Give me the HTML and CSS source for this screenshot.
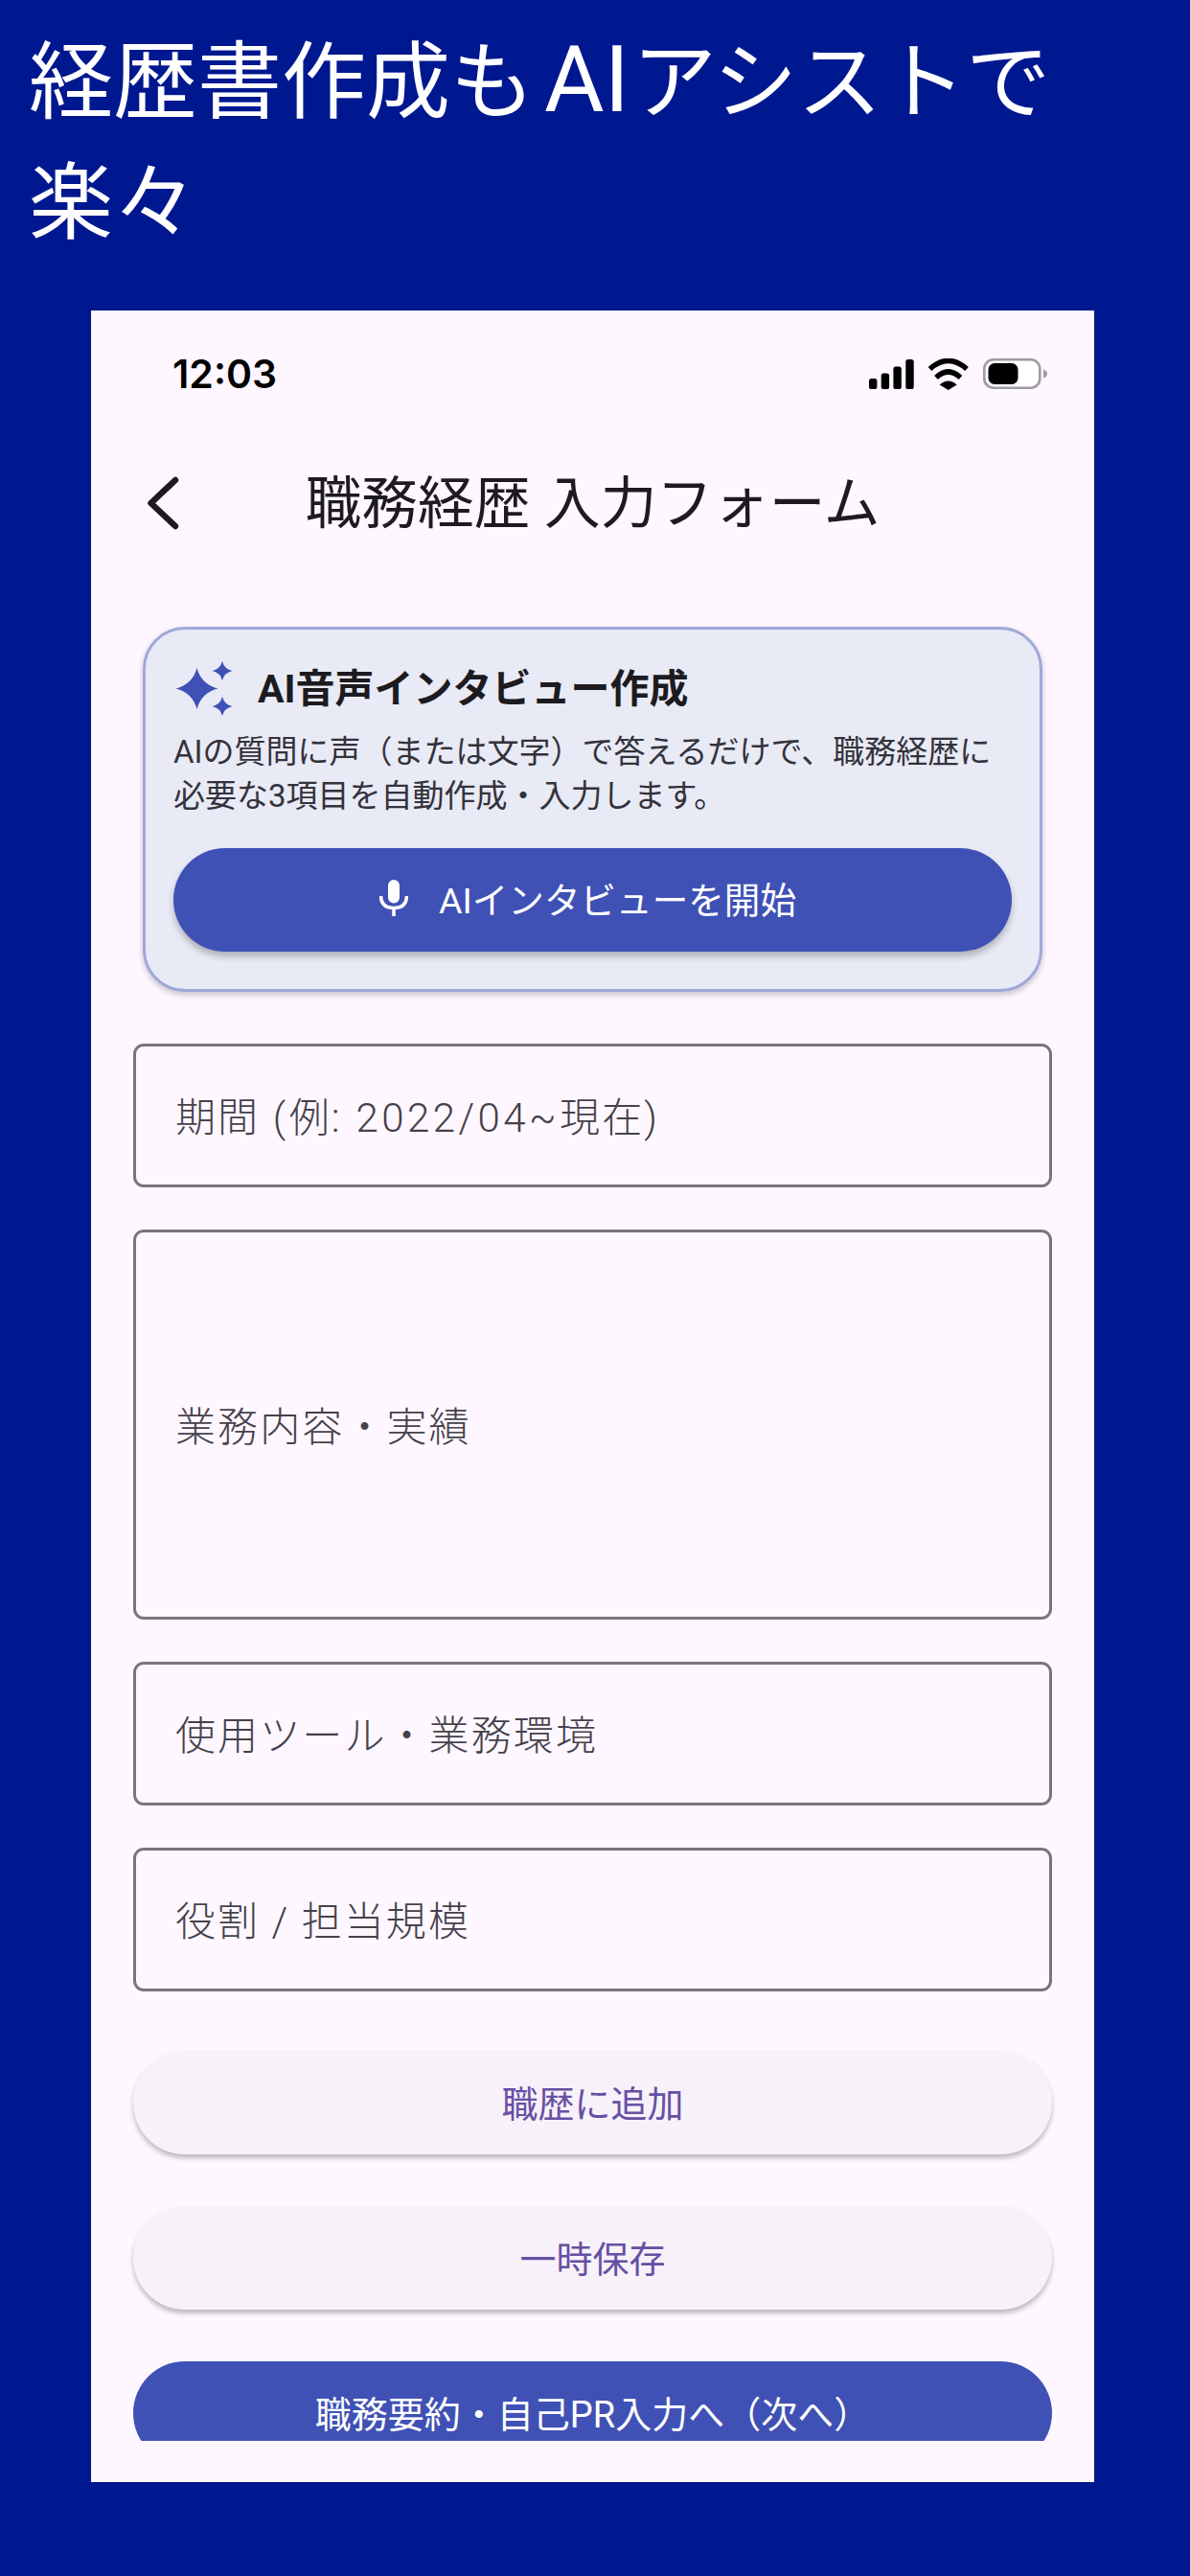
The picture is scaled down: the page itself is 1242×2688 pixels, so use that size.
FILE: index.html
```html
<!DOCTYPE html>
<html lang="ja">
<head>
<meta charset="utf-8">
<title>職務経歴 入力フォーム</title>
<link rel="stylesheet" href="styles.css">
</head>
<body>
<h1 class="headline">経歴書作成も<span class="headline-ai">AI</span>アシストで<br>楽々</h1>
<main class="phone">
  <div class="screen">
    <div class="status-bar">
      <span class="clock">12:03</span>
      <div class="status-icons">
        <svg class="ic-signal" viewBox="0 0 47 31" aria-hidden="true"><rect x="0" y="20" width="8.4" height="11" rx="2.6"/><rect x="12.7" y="14.5" width="8.4" height="16.5" rx="2.6"/><rect x="25.4" y="7.5" width="8.4" height="23.5" rx="2.6"/><rect x="38.3" y="0" width="8.4" height="31" rx="2.6"/></svg>
        <svg class="ic-wifi" viewBox="0 0 44 33" aria-hidden="true"><path class="wifi-arc" d="M2.5 11Q21.7 -6 41 11"/><path class="wifi-arc" d="M9 20Q21.7 8 34.4 20"/><path d="M12.7 27.5Q21.7 19.5 30.7 27.5L21.7 33Z"/></svg>
        <svg class="ic-battery" viewBox="0 0 67 32" aria-hidden="true"><rect class="batt-case" x="1.3" y="1.3" width="58" height="29.4" rx="9.5"/><rect x="5.5" y="5" width="31" height="22" rx="6.5"/><path class="batt-cap" d="M63 11.5Q67 13 67 16Q67 19 63 20.5Z"/></svg>
      </div>
    </div>
    <header class="app-bar">
      <svg class="ic-back" viewBox="0 0 36 56" aria-hidden="true"><path d="M29 4L3.500 28L29 52"/></svg>
      <h2 class="page-title">職務経歴 入力フォーム</h2>
    </header>
    <div class="content">
      <section class="ai-card">
        <div class="ai-head">
          <svg class="ic-sparkle" viewBox="0 0 62 57" aria-hidden="true"><path d="M24.5 7Q29 24 46.500 28.500Q29 33 24.500 50Q20 33 2.500 28.500Q20 24 24.500 7Z"/><path d="M51 0Q53 8 61.500 10Q53 12 51 20Q49 12 40.500 10Q49 8 51 0Z"/><path d="M51 37Q53 45 61.500 47Q53 49 51 57Q49 49 40.500 47Q49 45 51 37Z"/></svg>
          <h3 class="ai-title">AI音声インタビュー作成</h3>
        </div>
        <p class="ai-desc">AIの質問に声（または文字）で答えるだけで、職務経歴に必要な3項目を自動作成・入力します。</p>
        <button class="btn btn-primary btn-interview" type="button">
          <svg class="ic-mic" viewBox="0 0 30 38" aria-hidden="true"><rect x="9" y="0" width="12" height="24.500" rx="6"/><path class="mic-line" d="M1.500 17Q2 29.500 15 29.500Q28 29.500 28.500 17M15 29.500V38"/></svg>
          <span class="btn-label">AIインタビューを開始</span>
        </button>
      </section>
      <div class="fields">
        <div class="field"><span>期間<span class="latin"> (</span>例<span class="latin">: 2022/04~</span>現在<span class="latin">)</span></span></div>
        <div class="field field-tall"><span>業務内容・実績</span></div>
        <div class="field"><span>使用ツール・業務環境</span></div>
        <div class="field"><span>役割 / 担当規模</span></div>
      </div>
      <div class="actions">
        <button class="btn btn-tonal" type="button">職歴に追加</button>
        <button class="btn btn-tonal" type="button">一時保存</button>
        <button class="btn btn-primary" type="button">職務要約・自己PR入力へ（次へ）</button>
      </div>
    </div>
  </div>
</main>
</body>
</html>
```

FILE: styles.css
```css
* { box-sizing: border-box; }
html, body { margin: 0; padding: 0; }
body {
  width: 1242px;
  height: 2688px;
  overflow: hidden;
  background: #00188f;
  font-family: Roboto, "Noto Sans CJK JP", sans-serif;
}
.headline {
  margin: 0;
  padding: 23px 90px 0 30px;
  font-size: 88px;
  font-weight: 400;
  line-height: 126px;
  color: #fff;
}
.headline-ai { margin: 0 3px 0 10px; font-size: 96px; line-height: 1; }
.phone {
  width: 1047px;
  height: 2266px;
  margin: 49px 0 0 95px;
  background: #fef7ff;
}
.screen { height: 2223px; overflow: hidden; }
.status-bar {
  height: 132px;
  padding: 0 49px 0 85px;
  display: flex;
  align-items: center;
  justify-content: space-between;
}
.clock {
  font-family: Inter, sans-serif;
  font-size: 41px;
  font-weight: 600;
  color: #000;
}
.status-icons { display: flex; align-items: center; gap: 14px; }
.status-icons svg { display: block; fill: #000; }
.ic-signal { width: 47px; height: 31px; }
.ic-wifi { width: 44px; height: 33px; }
.ic-battery { width: 67px; height: 32px; }
.wifi-arc { fill: none; stroke: #000; stroke-width: 5.500; }
.batt-case { fill: #fff; stroke: #9c9ca1; stroke-width: 2.600; }
.status-icons .batt-cap { fill: #9c9ca1; }
.app-bar {
  height: 138px;
  padding: 0 59px;
  display: grid;
  grid-template-columns: 1fr auto 1fr;
  align-items: center;
}
.ic-back { width: 36px; height: 56px; fill: none; stroke: #1d1b20; stroke-width: 6.500; stroke-linecap: round; stroke-linejoin: round; }
.page-title {
  margin: 0 0 10px;
  font-size: 58.700px;
  font-weight: 400;
  color: #1d1b20;
  white-space: nowrap;
}
.content { padding: 60px 44px 0; }
.ai-card {
  margin: 0 10px 54px;
  height: 381px;
  padding: 33px 29px 39px;
  border: 3px solid #9fa8da;
  border-radius: 44px;
  background: #e8eaf6;
  box-shadow: 0 3px 6px rgba(0, 0, 0, .22);
}
.ai-head { display: flex; align-items: center; gap: 26px; height: 57px; }
.ic-sparkle { width: 62px; height: 57px; fill: #3f51b5; flex: none; }
.ai-title {
  margin: 0 0 8px;
  font-size: 41px;
  font-weight: 700;
  color: #1d1b20;
  white-space: nowrap;
}
.ai-desc {
  margin: 15px 0 31px;
  padding-right: 8px;
  font-size: 33px;
  line-height: 46px;
  color: #34323a;
}
.btn {
  display: flex;
  align-items: center;
  justify-content: center;
  width: 100%;
  height: 108px;
  border: 0;
  border-radius: 54px;
  font-family: inherit;
  font-size: 38px;
  padding: 0 0 4px;
}
.btn-primary { background: #3f51b5; color: #fff; }
.btn-tonal { background: #f7f2fa; color: #6750a4; box-shadow: 0 4px 5px rgba(0, 0, 0, .25); }
.btn-interview { gap: 32px; padding-right: 10px; font-size: 37.600px; box-shadow: 0 5px 7px rgba(0, 0, 0, .25); }
.btn-label { margin-bottom: 1px; }
.ic-mic { width: 30px; height: 38px; fill: #fff; }
.mic-line { fill: none; stroke: #fff; stroke-width: 3.600; }
.fields { display: flex; flex-direction: column; gap: 44px; }
.field {
  height: 150px;
  padding: 0 41px 3px;
  display: flex;
  align-items: center;
  border: 3px solid #79747e;
  border-radius: 11px;
  font-size: 42px;
  font-weight: 300;
  letter-spacing: 2.100px;
  color: #45414b;
}
.latin { letter-spacing: 3.400px; }
.field-tall { height: 407px; }
.actions { margin-top: 62px; display: flex; flex-direction: column; gap: 54px; }
```
